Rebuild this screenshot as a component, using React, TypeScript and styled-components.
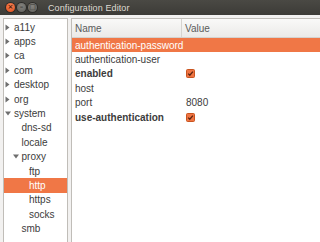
import styled, { createGlobalStyle } from "styled-components";

const GlobalStyle = createGlobalStyle`
  html, body {
    margin: 0;
    padding: 0;
    background: #f2f1f0;
    font-family: "Liberation Sans", Arial, sans-serif;
  }
`;

interface TreeItem {
  label: string
  depth: number
  expander?: "closed" | "open"
  selected?: boolean
}

const tree: TreeItem[] = [
  { label: "a11y", depth: 0, expander: "closed" },
  { label: "apps", depth: 0, expander: "closed" },
  { label: "ca", depth: 0, expander: "closed" },
  { label: "com", depth: 0, expander: "closed" },
  { label: "desktop", depth: 0, expander: "closed" },
  { label: "org", depth: 0, expander: "closed" },
  { label: "system", depth: 0, expander: "open" },
  { label: "dns-sd", depth: 1 },
  { label: "locale", depth: 1 },
  { label: "proxy", depth: 1, expander: "open" },
  { label: "ftp", depth: 2 },
  { label: "http", depth: 2, selected: true },
  { label: "https", depth: 2 },
  { label: "socks", depth: 2 },
  { label: "smb", depth: 1 },
];

interface Entry {
  name: string
  bold?: boolean
  value?: string
  checked?: boolean
  selected?: boolean
}

const entries: Entry[] = [
  { name: "authentication-password", selected: true },
  { name: "authentication-user" },
  { name: "enabled", bold: true, checked: true },
  { name: "host" },
  { name: "port", value: "8080" },
  { name: "use-authentication", bold: true, checked: true },
];

const Expander = ({ state }: { state: "closed" | "open" }) => (
  <ExpanderBox>
    <svg width="7" height="7" viewBox="0 0 7 7">
      {state === "closed"
        ? <polygon points="0.5,0.5 4.5,3.5 0.5,6.5" fill="#6e6e6e"/>
        : <polygon points="0,1.5 6,1.5 3,5.5" fill="#6e6e6e"/>}
    </svg>
  </ExpanderBox>
);

const Check = () => (
  <CheckBox>
    <svg width="9" height="9" viewBox="0 0 9 9">
      <rect x="0.5" y="0.5" width="8" height="8" rx="1" fill="#ef7443" stroke="#c9541f"/>
      <path d="M2.2 4.6 L3.8 6.2 L6.9 2.6" fill="none" stroke="#5a2410" strokeWidth="1.3"/>
    </svg>
  </CheckBox>
);

export default function App() {
  return (
    <>
      <GlobalStyle/>
      <Window>
        <TitleBar>
          <Controls>
            <WinButton $kind="close"><span>×</span></WinButton>
            <WinButton $kind="min"><span>–</span></WinButton>
            <WinButton $kind="max"><span>□</span></WinButton>
          </Controls>
          <Title>Configuration Editor</Title>
        </TitleBar>
        <Body>
          <TreePane>
            {tree.map((item) => (
              <TreeRow key={item.label} $depth={item.depth} $selected={!!item.selected}>
                {item.expander ? <Expander state={item.expander}/> : <ExpanderBox/>}
                <span>{item.label}</span>
              </TreeRow>
            ))}
          </TreePane>
          <ListPane>
            <Header>
              <HeaderCell>Name</HeaderCell>
              <HeaderCell $last>Value</HeaderCell>
            </Header>
            {entries.map((e) => (
              <Row key={e.name} $selected={!!e.selected}>
                <NameCell $bold={!!e.bold}>{e.name}</NameCell>
                <ValueCell>
                  {e.checked ? <Check/> : e.value}
                </ValueCell>
              </Row>
            ))}
          </ListPane>
        </Body>
      </Window>
    </>
  );
}

const Window = styled.div`
  width: 320px;
  height: 242px;
  overflow: hidden;
  display: flex;
  flex-direction: column;
  background: #f2f1f0;
`

const TitleBar = styled.div`
  height: 15px;
  flex: none;
  display: flex;
  align-items: center;
  padding-left: 6px;
  background: linear-gradient(#4a4944, #3c3b37);
`

const Controls = styled.div`
  display: flex;
  gap: 2px;
`

const WinButton = styled.div<{ $kind: "close" | "min" | "max" }>`
  width: 9px;
  height: 9px;
  border-radius: 50%;
  display: flex;
  align-items: center;
  justify-content: center;
  background: ${p => p.$kind === "close"
    ? "radial-gradient(circle at 50% 35%, #f5865a, #df4a16)"
    : "radial-gradient(circle at 50% 35%, #84837e, #5f5e5a)"};
  box-shadow: 0 0 0 1px #2e2d2a;

  span {
    font-family: "DejaVu Sans", sans-serif;
    font-size: 7px;
    line-height: 1;
    font-weight: bold;
    color: ${p => p.$kind === "close" ? "#5a1a05" : "#3a3935"};
  }
`

const Title = styled.div`
  margin-left: 11px;
  font-size: 9px;
  color: #dfdbd2;
  letter-spacing: 0.1px;
`

const Body = styled.div`
  flex: 1;
  display: flex;
  gap: 3px;
  padding: 3px 0 0 3px;
  min-height: 0;
`

const TreePane = styled.div`
  width: 63px;
  flex: none;
  background: #fff;
  border: 1px solid #c0bdb8;
  border-bottom: none;
  padding-top: 1px;
`

const TreeRow = styled.div<{ $depth: number; $selected: boolean }>`
  height: 14.4px;
  display: flex;
  align-items: center;
  padding-left: ${p => 1 + p.$depth * 7.5}px;
  font-size: 10px;
  color: ${p => p.$selected ? "#fff" : "#3c3c3c"};
  background: ${p => p.$selected ? "#f07746" : "transparent"};
  white-space: nowrap;
`

const ExpanderBox = styled.span`
  width: 7px;
  height: 7px;
  flex: none;
  display: flex;
  align-items: center;
  margin-right: 2px;
`

const ListPane = styled.div`
  flex: 1;
  background: #fff;
  border-left: 1px solid #c0bdb8;
  border-top: 1px solid #c0bdb8;
`

const columns = `110px 1fr`

const Header = styled.div`
  height: 18px;
  display: grid;
  grid-template-columns: ${columns};
  background: linear-gradient(#f9f9f8, #ebeae8);
  border-bottom: 1px solid #d4d2cf;
`

const HeaderCell = styled.div<{ $last?: boolean }>`
  display: flex;
  align-items: center;
  padding-left: 3px;
  font-size: 10px;
  color: #5b5b5b;
  border-right: ${p => p.$last ? "none" : "1px solid #d6d4d0"};
`

const Row = styled.div<{ $selected: boolean }>`
  height: 14.4px;
  display: grid;
  grid-template-columns: ${columns};
  align-items: center;
  font-size: 10px;
  color: ${p => p.$selected ? "#fff" : "#3c3c3c"};
  background: ${p => p.$selected ? "#f07746" : "transparent"};
`

const NameCell = styled.div<{ $bold: boolean }>`
  padding-left: 3px;
  font-weight: ${p => p.$bold ? "bold" : "normal"};
  white-space: nowrap;
`

const ValueCell = styled.div`
  padding-left: 4px;
  display: flex;
  align-items: center;
`

const CheckBox = styled.span`
  display: flex;
  width: 9px;
  height: 9px;
`
